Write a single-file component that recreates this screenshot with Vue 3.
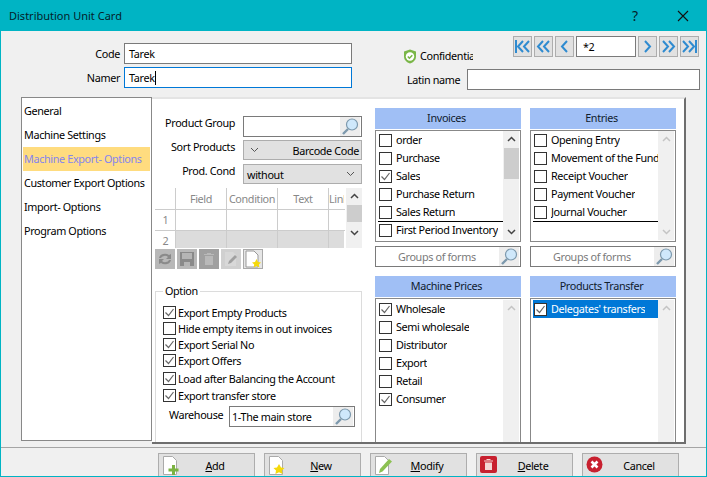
<template>
  <div class="window">
    <div class="titlebar">
      <span class="title">Distribution Unit Card</span>
      <span class="help">?</span>
      <svg class="close" width="14" height="14" viewBox="0 0 14 14"><path d="M2 2l10 10M12 2L2 12" stroke="#111" stroke-width="1.1" fill="none" /></svg>
    </div>

    <div class="head">
      <div class="head-left">
        <div class="field-row">
          <label>Code</label>
          <div class="input name-input">Tarek</div>
        </div>
        <div class="field-row">
          <label>Namer</label>
          <div class="input name-input focused">Tarek<i class="caret"></i></div>
        </div>
      </div>
      <div class="head-right">
        <div class="conf-row">
          <div class="confidential">
            <svg width="14" height="15" viewBox="0 0 14 15">
              <path d="M7 .5l6 2v5c0 3.5-2.6 5.800-6 7-3.400-1.200-6-3.500-6-7v-5z" fill="#7ab648" />
              <circle cx="7" cy="7.500" r="4.200" fill="#fff" />
              <path d="M4.800 7.500l1.600 1.700 2.900-3" stroke="#7ab648" stroke-width="1.600" fill="none" />
            </svg>
            <span class="conf-text">Confidential</span>
          </div>
          <div class="nav">
            <button v-for="n in navBefore" :key="n" class="nav-btn">
              <svg width="17" height="17" viewBox="0 0 17 17"><path :d="n" stroke="#2f8bd0" stroke-width="2" fill="none" /></svg>
            </button>
            <div class="input nav-input">*2</div>
            <button v-for="n in navAfter" :key="n" class="nav-btn">
              <svg width="17" height="17" viewBox="0 0 17 17"><path :d="n" stroke="#2f8bd0" stroke-width="2" fill="none" /></svg>
            </button>
          </div>
        </div>
        <div class="latin-row">
          <label>Latin name</label>
          <div class="input latin-input"></div>
        </div>
      </div>
    </div>

    <div class="main">
      <ul class="sidebar">
        <li v-for="s in sections" :key="s" :class="{ active: s === 'Machine Export- Options' }">{{ s }}</li>
      </ul>

      <div class="panel">
        <div class="col-settings">
          <div class="set-row">
            <label>Product Group</label>
            <div class="input set-input lookup">
              <span></span>
              <svg class="glass" width="20" height="19" viewBox="0 0 20 19"><use href="#glass" /></svg>
            </div>
          </div>
          <div class="set-row">
            <label>Sort Products</label>
            <div class="combo">
              <svg width="9" height="6" viewBox="0 0 9 6"><path d="M1 1l3.500 3.500L8 1" stroke="#555" fill="none" /></svg>
              <span>Barcode Code</span>
            </div>
          </div>
          <div class="set-row">
            <label>Prod. Cond</label>
            <div class="combo cond">
              <span>without</span>
              <svg width="9" height="6" viewBox="0 0 9 6"><path d="M1 1l3.500 3.500L8 1" stroke="#555" fill="none" /></svg>
            </div>
          </div>

          <div class="grid-box">
            <div class="grid-body">
              <div class="grid-row grid-head">
                <div class="rownum"></div>
                <div v-for="c in columns" :key="c" class="cell" :class="{ narrow: c === 'Link' }">{{ c }}</div>
              </div>
              <div class="grid-row grid-first">
                <div class="rownum">1</div>
                <div v-for="c in columns" :key="c" class="cell" :class="{ narrow: c === 'Link' }"></div>
              </div>
              <div class="grid-row grid-second">
                <div class="rownum">2</div>
                <div v-for="c in columns" :key="c" class="cell" :class="{ narrow: c === 'Link' }"></div>
              </div>
            </div>
            <div class="scrollbar grid-scroll">
              <svg width="9" height="6" viewBox="0 0 9 6"><path d="M1 5l3.500-3.500L8 5" stroke="#444" stroke-width="1.500" fill="none" /></svg>
              <div class="thumb grid-thumb"></div>
              <svg width="9" height="6" viewBox="0 0 9 6"><path d="M1 1l3.500 3.500L8 1" stroke="#444" stroke-width="1.500" fill="none" /></svg>
            </div>
          </div>

          <div class="tools">
            <div class="tool">
              <svg width="16" height="16" viewBox="0 0 16 16"><path d="M2 7a6 5 0 0 1 10-3l2-1v5H9l2-2a4 3 0 0 0-7 1zM14 9a6 5 0 0 1-10 3l-2 1V8h5l-2 2a4 3 0 0 0 7-1z" fill="#8a8a8a" /></svg>
            </div>
            <div class="tool">
              <svg width="16" height="16" viewBox="0 0 16 16"><path d="M1 1h14v14H1z" fill="#8a8a8a" /><path d="M3 2h10v6H3z" fill="#b5b5b5" /><path d="M5 11h6v4H5z" fill="#b5b5b5" /></svg>
            </div>
            <div class="tool dark">
              <svg width="16" height="16" viewBox="0 0 16 16"><path d="M4 5h8v9H4zM3 3h10v1H3zM6 2h4v1H6z" fill="#b9b9b9" /></svg>
            </div>
            <div class="tool light">
              <svg width="16" height="16" viewBox="0 0 16 16"><path d="M2 1h8l3 3v11H2z" fill="#d8d8d8" /><path d="M5 13l1-3 6-6 2 2-6 6z" fill="#a0a0a0" /></svg>
            </div>
            <div class="tool paper">
              <svg width="18" height="18" viewBox="0 0 18 18">
                <path d="M2 1h8l4 4v12H2z" fill="#fff" stroke="#999" />
                <path d="M12.500 9l1.500 3 3 .4-2.200 2.100.6 3-2.900-1.500-2.900 1.500.6-3L8 12.400l3-.4z" fill="#f5d90a" />
              </svg>
            </div>
          </div>

          <fieldset class="option">
            <legend>Option</legend>
            <div v-for="o in options" :key="o.label" class="opt" :class="o.cls">
              <span class="check">
                <svg v-if="o.on" width="11" height="11" viewBox="0 0 11 11"><use href="#tick" /></svg>
              </span>
              {{ o.label }}
            </div>
            <div class="warehouse">
              <label>Warehouse</label>
              <div class="input wh-input lookup">
                <span>1-The main store</span>
                <svg class="glass" width="20" height="19" viewBox="0 0 20 19"><use href="#glass" /></svg>
              </div>
            </div>
          </fieldset>
        </div>

        <div v-for="(stack, i) in stacks" :key="i" class="col-lists">
          <div class="group-head">{{ stack.top.title }}</div>
          <div class="checklist top-list">
            <div class="items">
              <div v-for="it in stack.top.items" :key="it.label" class="item" :class="{ ruled: it.ruled }">
                <span class="check">
                  <svg v-if="it.on" width="11" height="11" viewBox="0 0 11 11"><use href="#tick" /></svg>
                </span>
                <span class="item-label">{{ it.label }}</span>
              </div>
            </div>
            <div class="scrollbar" :class="{ idle: !stack.top.thumb }">
              <svg width="9" height="6" viewBox="0 0 9 6"><path d="M1 5l3.500-3.500L8 5" stroke="currentColor" stroke-width="1.500" fill="none" /></svg>
              <div v-if="stack.top.thumb" class="thumb"></div>
              <svg class="down" width="9" height="6" viewBox="0 0 9 6"><path d="M1 1l3.500 3.500L8 1" stroke="currentColor" stroke-width="1.500" fill="none" /></svg>
            </div>
          </div>
          <div class="input forms lookup">
            <span>Groups of forms</span>
            <svg class="glass" width="20" height="19" viewBox="0 0 20 19"><use href="#glass" /></svg>
          </div>

          <div class="group-head second">{{ stack.bottom.title }}</div>
          <div class="checklist bottom-list">
            <div class="items">
              <div v-for="it in stack.bottom.items" :key="it.label" class="item" :class="{ selected: it.selected }">
                <span class="check">
                  <svg v-if="it.on" width="11" height="11" viewBox="0 0 11 11"><use href="#tick" /></svg>
                </span>
                <span class="item-label">{{ it.label }}</span>
              </div>
            </div>
            <div class="scrollbar idle">
              <svg width="9" height="6" viewBox="0 0 9 6"><path d="M1 5l3.500-3.500L8 5" stroke="currentColor" stroke-width="1.500" fill="none" /></svg>
              <svg class="down" width="9" height="6" viewBox="0 0 9 6"><path d="M1 1l3.500 3.500L8 1" stroke="currentColor" stroke-width="1.500" fill="none" /></svg>
            </div>
          </div>
        </div>
      </div>
    </div>

    <div class="footer">
      <button v-for="b in buttons" :key="b.name" class="action">
        <svg class="action-icon" width="18" height="20" viewBox="0 0 18 20">
          <template v-if="b.name === 'Add' || b.name === 'New' || b.name === 'Modify'">
            <path d="M1.500 1.500h9l4 4v14h-13z" fill="#fff" stroke="#aaa" />
          </template>
          <path v-if="b.name === 'Add'" d="M10 10h3v3.500h3.500v3H13V20h-3v-3.500H6.500v-3H10z" fill="#7cb342" />
          <path v-if="b.name === 'New'" d="M11 9l2 3.500 3.500.5-2.500 2.500.6 3.500-3.600-1.800L7.400 19l.6-3.500L5.500 13l3.500-.5z" fill="#f5d90a" />
          <path v-if="b.name === 'Modify'" d="M5 18l1-4 9-10 3 2.500-9.500 10z" fill="#8cc152" />
          <template v-if="b.name === 'Delete'">
            <rect x="0" y="1" width="17" height="17" rx="2" fill="#c8202f" />
            <path d="M5 7.500h7V15H5zM4 5.500h9v1H4zM6.500 4h4v1h-4z" fill="#f4d6d6" />
          </template>
          <template v-if="b.name === 'Cancel'">
            <circle cx="8.500" cy="9.500" r="8" fill="#c8202f" />
            <path d="M5.500 6.500l6 6M11.500 6.500l-6 6" stroke="#fff" stroke-width="2.600" />
          </template>
        </svg>
        <span class="action-text"><u v-if="b.key">{{ b.key }}</u>{{ b.rest }}</span>
      </button>
    </div>

    <svg class="defs" width="0" height="0">
      <defs>
        <symbol id="glass" viewBox="0 0 20 19">
          <rect width="20" height="19" fill="#ededed" />
          <circle cx="12" cy="7.500" r="5.500" fill="#cfe8fb" stroke="#7d99ad" stroke-width="1.200" />
          <path d="M8 12l-5 5" stroke="#7d99ad" stroke-width="2.400" />
        </symbol>
        <symbol id="tick" viewBox="0 0 11 11">
          <path d="M1.500 5.500l3 3 5-6.500" stroke="#666" stroke-width="1.200" fill="none" />
        </symbol>
      </defs>
    </svg>
  </div>
</template>

<script setup>
const navBefore = ['M2 2v13M9 3L4 8.500 9 14M15 3l-5 5.500 5 5.500', 'M8 3L3 8.500 8 14M14 3L9 8.500l5 5.500', 'M11 3L6 8.500l5 5.500']
const navAfter = ['M6 3l5 5.500L6 14', 'M3 3l5 5.500L3 14M9 3l5 5.500L9 14', 'M2 3l5 5.500L2 14M8 3l5 5.500L8 14M15 2v13']

const sections = ['General', 'Machine Settings', 'Machine Export- Options', 'Customer Export Options', 'Import- Options', 'Program Options']
const columns = ['Field', 'Condition', 'Text', 'Link']

const options = [
  { label: 'Export Empty Products', on: true },
  { label: 'Hide empty items in out invoices', on: false },
  { label: 'Export Serial No', on: true },
  { label: 'Export Offers', on: true },
  { label: 'Load after Balancing the Account', on: true, cls: 'gap-row' },
  { label: 'Export transfer store', on: true }
]

const stacks = [
  {
    top: {
      title: 'Invoices',
      thumb: true,
      items: [
        { label: 'order' },
        { label: 'Purchase' },
        { label: 'Sales', on: true },
        { label: 'Purchase Return' },
        { label: 'Sales Return', ruled: true },
        { label: 'First Period Inventory' }
      ]
    },
    bottom: {
      title: 'Machine Prices',
      items: [
        { label: 'Wholesale', on: true },
        { label: 'Semi wholesale' },
        { label: 'Distributor' },
        { label: 'Export' },
        { label: 'Retail' },
        { label: 'Consumer', on: true }
      ]
    }
  },
  {
    top: {
      title: 'Entries',
      thumb: false,
      items: [
        { label: 'Opening Entry' },
        { label: 'Movement of the Fund' },
        { label: 'Receipt Voucher' },
        { label: 'Payment Voucher' },
        { label: 'Journal Voucher', ruled: true }
      ]
    },
    bottom: {
      title: 'Products Transfer',
      items: [{ label: "Delegates' transfers", on: true, selected: true }]
    }
  }
]

const buttons = [
  { name: 'Add', key: 'A', rest: 'dd' },
  { name: 'New', key: 'N', rest: 'ew' },
  { name: 'Modify', key: 'M', rest: 'odify' },
  { name: 'Delete', key: 'D', rest: 'elete' },
  { name: 'Cancel', key: '', rest: 'Cancel' }
]
</script>

<style scoped>
.window {
  width: 707px;
  height: 477px;
  box-sizing: border-box;
  overflow: hidden;
  display: flex;
  flex-direction: column;
  background: #f0f0f0;
  border: 1px solid #00b4c4;
  border-top: 0;
  font: 10.8px "Noto Sans", "Liberation Sans", sans-serif;
  letter-spacing: -0.35px;
  color: #000;
}
.defs {
  display: block;
  height: 0;
}
.titlebar {
  height: 31px;
  flex: none;
  margin: 0 -1px;
  background: #00b4c4;
  display: flex;
  align-items: center;
  padding-left: 9px;
  font-size: 11px;
  letter-spacing: 0;
  color: #04222a;
}
.title {
  flex: 1;
}
.help {
  font-size: 14px;
  margin-right: 38px;
}
.close {
  margin-right: 17px;
}
.head {
  height: 66px;
  flex: none;
  display: flex;
}
.head-left {
  width: 402px;
  padding-top: 12px;
  box-sizing: border-box;
}
.field-row {
  display: flex;
  align-items: center;
  margin-bottom: 3px;
}
.field-row label {
  width: 119px;
  margin-right: 4px;
  text-align: right;
}
.input {
  box-sizing: border-box;
  background: #fff;
  border: 1px solid #7a7a7a;
  display: flex;
  align-items: center;
  padding-left: 4px;
  overflow: hidden;
  white-space: nowrap;
}
.name-input {
  width: 228px;
  height: 21px;
}
.focused {
  border-color: #0078d7;
}
.caret {
  width: 1px;
  height: 14px;
  background: #000;
}
.head-right {
  padding-top: 5px;
}
.conf-row {
  display: flex;
  height: 28px;
}
.confidential {
  width: 110px;
  display: flex;
  align-items: flex-end;
  gap: 3px;
  line-height: 16px;
}
.conf-text {
  width: 53px;
  overflow: hidden;
  white-space: nowrap;
}
.nav {
  display: flex;
  gap: 2px;
  height: 21px;
}
.nav-btn {
  width: 19px;
  height: 21px;
  box-sizing: border-box;
  padding: 0;
  background: #e1e1e1;
  border: 1px solid #adadad;
  display: flex;
  align-items: center;
  justify-content: center;
}
.nav-input {
  width: 60px;
  height: 21px;
  padding-left: 6px;
}
.latin-row {
  display: flex;
  align-items: center;
  margin-top: 5px;
  padding-left: 4px;
}
.latin-row label {
  width: 60px;
  white-space: nowrap;
}
.latin-input {
  width: 233px;
  height: 21px;
}
.main {
  height: 347px;
  flex: none;
  display: flex;
  padding-left: 20px;
}
.sidebar {
  list-style: none;
  width: 131px;
  height: 344px;
  box-sizing: border-box;
  margin: 0;
  padding: 1px;
  background: #fff;
  border: 1px solid #888;
  flex: none;
}
.sidebar li {
  height: 24px;
  line-height: 24px;
  padding-left: 1px;
  white-space: nowrap;
}
.sidebar li.active {
  background: #ffdc7f;
  color: #8585ee;
}
.panel {
  width: 534px;
  height: 347px;
  box-sizing: border-box;
  flex: none;
  background: #fff;
  border-top: 2px solid #e4e4e4;
  border-right: 2px solid #6e6e6e;
  border-bottom: 2px solid #6e6e6e;
  display: flex;
  overflow: hidden;
}
.col-settings {
  width: 207px;
  margin-left: 3px;
  margin-right: 13px;
  padding-top: 17px;
  flex: none;
}
.set-row {
  display: flex;
  height: 20px;
  margin-bottom: 4px;
}
.set-row label {
  width: 80px;
  margin-right: 8px;
  text-align: right;
  line-height: 14px;
}
.set-input {
  width: 119px;
  height: 21px;
}
.lookup {
  justify-content: space-between;
  padding-right: 1px;
}
.combo {
  width: 119px;
  height: 20px;
  box-sizing: border-box;
  background: #e1e1e1;
  border: 1px solid #adadad;
  display: flex;
  align-items: center;
  justify-content: space-between;
  padding: 0 2px 0 6px;
  white-space: nowrap;
}
.cond {
  padding: 0 6px 0 3px;
}
.grid-box {
  width: 207px;
  height: 60px;
  display: flex;
  margin-top: 1px;
  color: #888;
  overflow: hidden;
}
.grid-body {
  width: 190px;
  overflow: hidden;
  flex: none;
}
.grid-row {
  display: flex;
  box-sizing: border-box;
}
.grid-head {
  height: 22px;
  border-bottom: 1px solid #ccc;
}
.grid-first {
  height: 21px;
  border-bottom: 1px solid #ccc;
}
.grid-second {
  height: 17px;
}
.grid-second .cell {
  background: #dcdcdc;
}
.rownum {
  width: 20px;
  flex: none;
  text-align: center;
  line-height: 20px;
  box-sizing: border-box;
  padding-left: 1px;
}
.cell {
  width: 51px;
  flex: none;
  box-sizing: border-box;
  border-left: 1px solid #ccc;
  text-align: center;
  line-height: 22px;
}
.narrow {
  width: 16px;
  overflow: hidden;
}
.scrollbar {
  width: 16px;
  flex: none;
  background: #f0f0f0;
  display: flex;
  flex-direction: column;
  align-items: center;
  padding-top: 5px;
  color: #444;
  box-sizing: border-box;
}
.grid-scroll {
  margin-left: 1px;
  height: 60px;
}
.thumb {
  width: 15px;
  height: 31px;
  background: #cdcdcd;
  margin-top: 6px;
}
.grid-thumb {
  height: 17px;
  margin-top: 6px;
  margin-bottom: 8px;
}
.tools {
  display: flex;
  gap: 2px;
  margin-top: 1px;
}
.tool {
  width: 20px;
  height: 20px;
  background: #b8b8b8;
  display: flex;
  align-items: center;
  justify-content: center;
}
.tool.dark {
  background: #a0a0a0;
}
.tool.light {
  background: #d0d0d0;
}
.tool.paper {
  background: #e6e6e6;
  border: 1px solid #aaa;
  box-sizing: border-box;
}
.option {
  width: 207px;
  height: 170px;
  box-sizing: border-box;
  margin: 15px 0 0;
  padding: 6px 0 0 7px;
  border: 1px solid #dcdcdc;
}
.option legend {
  padding: 0 2px;
  line-height: 14px;
}
.opt {
  height: 16px;
  display: flex;
  align-items: center;
  gap: 2px;
  white-space: nowrap;
}
.gap-row {
  margin-top: 2px;
  height: 17px;
}
.check {
  width: 13px;
  height: 13px;
  box-sizing: border-box;
  flex: none;
  background: #fff;
  border: 1px solid #333;
  display: flex;
  align-items: center;
  justify-content: center;
}
.warehouse {
  display: flex;
  align-items: center;
  margin-top: 3px;
  margin-left: 6px;
}
.warehouse label {
  width: 60px;
  margin-top: -4px;
}
.wh-input {
  width: 126px;
  height: 21px;
  padding-left: 2px;
}
.col-lists {
  width: 146px;
  margin-right: 9px;
  padding-top: 9px;
  flex: none;
}
.group-head {
  height: 21px;
  line-height: 20px;
  background: #a0bff5;
  text-align: center;
  color: #10202e;
  padding-right: 3px;
  box-sizing: border-box;
}
.group-head.second {
  margin-top: 9px;
}
.checklist {
  box-sizing: border-box;
  margin-top: 1px;
  background: #fff;
  border: 1px solid #888;
  display: flex;
  padding: 0 1px 1px;
}
.top-list {
  height: 112px;
}
.bottom-list {
  height: 160px;
  padding-top: 1px;
}
.items {
  width: 125px;
  margin-left: 1px;
  flex: none;
  overflow: hidden;
}
.item {
  height: 18px;
  box-sizing: border-box;
  display: flex;
  align-items: center;
  padding-left: 1px;
  gap: 4px;
  white-space: nowrap;
}
.item.ruled {
  box-shadow: 0 1px 0 #000;
}
.item.selected {
  background: #0078d7;
  color: #fff;
}
.item-label {
  overflow: hidden;
  margin-top: -2px;
}
.checklist .scrollbar .down {
  margin-top: auto;
  margin-bottom: 5px;
}
.scrollbar.idle {
  color: #c4c4c4;
}
.forms {
  height: 21px;
  margin-top: 4px;
  color: #7a7a7a;
  padding-left: 22px;
}
.footer {
  flex: 1;
  border-top: 1px solid #a5a5a5;
  margin-top: 3px;
  display: flex;
  gap: 9px;
  padding: 5px 0 0 157px;
}
.action {
  width: 97px;
  height: 24px;
  flex: none;
  box-sizing: border-box;
  padding: 0 0 0 3px;
  background: #e1e1e1;
  border: 1px solid #adadad;
  display: flex;
  align-items: center;
  font: inherit;
  letter-spacing: inherit;
  color: #000;
}
.action-text {
  flex: 1;
  text-align: center;
  padding-right: 4px;
}
</style>

<style>
html,
body {
  margin: 0;
  overflow: hidden;
}
</style>
